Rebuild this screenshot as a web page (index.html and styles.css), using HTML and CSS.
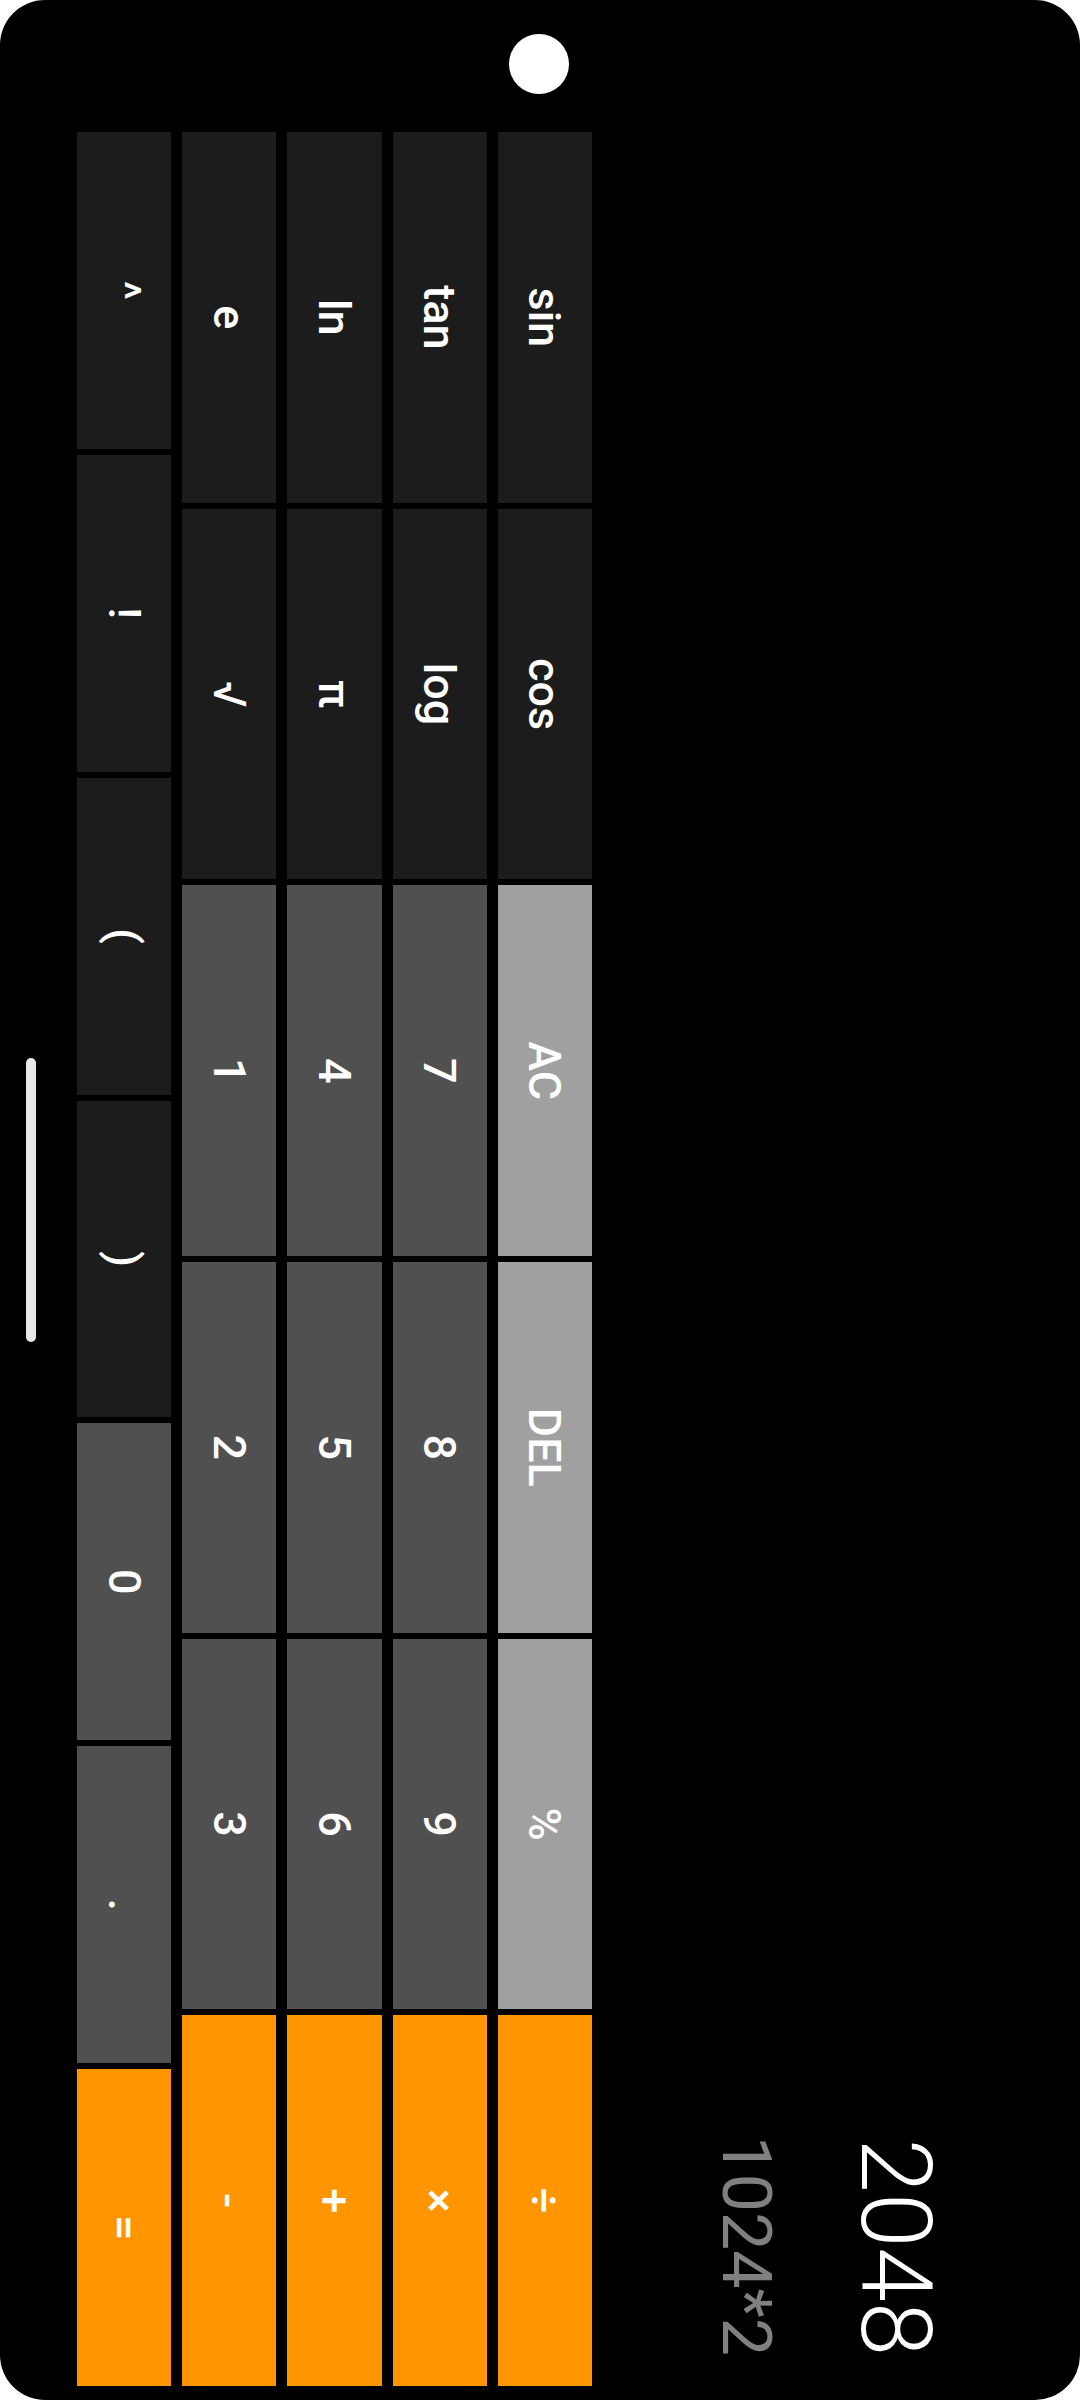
FILE: index.html
```html
<!DOCTYPE html>
<html lang="en">
<head>
  <meta charset="UTF-8" />
  <meta name="viewport" content="width=device-width, initial-scale=1.0"/>
  <title>Calculator</title>
  <link rel="stylesheet" href="styles.css">
</head>
<body>
  <div class="frame">
    <!-- phone is held in landscape, so the whole screen is turned a quarter clockwise -->
    <div class="screen">
      <div class="main">
        <div class="inset">
          <div class="camera"></div>
        </div>

        <div class="calc">
          <div class="display">
            <div class="result">2048</div>
            <div class="expr">1024*2</div>
          </div>

          <div class="keys">
            <div class="row">
              <div class="key fn">sin</div>
              <div class="key fn">cos</div>
              <div class="key top">AC</div>
              <div class="key top">DEL</div>
              <div class="key top">%</div>
              <div class="key op">÷</div>
            </div>
            <div class="row">
              <div class="key fn">tan</div>
              <div class="key fn">log</div>
              <div class="key num">7</div>
              <div class="key num">8</div>
              <div class="key num">9</div>
              <div class="key op">×</div>
            </div>
            <div class="row">
              <div class="key fn">ln</div>
              <div class="key fn">π</div>
              <div class="key num">4</div>
              <div class="key num">5</div>
              <div class="key num">6</div>
              <div class="key op">+</div>
            </div>
            <div class="row">
              <div class="key fn">e</div>
              <div class="key fn">√</div>
              <div class="key num">1</div>
              <div class="key num">2</div>
              <div class="key num">3</div>
              <div class="key op">-</div>
            </div>
            <div class="row">
              <div class="key fn">^</div>
              <div class="key fn">!</div>
              <div class="key fn">(</div>
              <div class="key fn">)</div>
              <div class="key num">0</div>
              <div class="key num">.</div>
              <div class="key op">=</div>
            </div>
          </div>
        </div>
      </div>

      <div class="navbar">
        <div class="handle"></div>
      </div>
    </div>
  </div>
</body>
</html>
```

FILE: styles.css
```css
html, body {
  margin: 0;
  padding: 0;
  overflow: hidden;
  background: white;
}

body {
  font-family: Roboto, 'Noto Sans', sans-serif;
}

.frame {
  width: 1080px;
  height: 2400px;
  overflow: hidden;
}

.screen {
  width: 2400px;
  height: 1080px;
  background: #000;
  border-radius: 45px;
  display: flex;
  flex-direction: column;
  transform-origin: 0 0;
  transform: translateX(1080px) rotate(90deg);
}

.main {
  height: 1003px;
  display: flex;
}

.inset {
  width: 132px;
  flex-shrink: 0;
}

.camera {
  width: 60px;
  height: 60px;
  border-radius: 50%;
  background: #fff;
  margin: 511px 0 0 34px;
}

.calc {
  flex: 1;
  display: flex;
  flex-direction: column;
  padding-right: 14px;
}

.display {
  height: 488px;
  box-sizing: border-box;
  padding: 129px 30px 0 0;
  text-align: right;
}

.result {
  font-size: 98px;
  font-weight: 300;
  line-height: 112px;
  color: #fff;
}

.expr {
  font-size: 68px;
  line-height: 80px;
  margin-top: 53px;
  color: #808080;
}

.keys {
  height: 515px;
  display: flex;
  flex-direction: column;
  gap: 11px;
}

.row {
  flex: 1;
  display: flex;
  gap: 6px;
}

.key {
  flex: 1;
  display: flex;
  align-items: center;
  justify-content: center;
  font-size: 45px;
  font-weight: 500;
  color: #fff;
}

.fn {
  background: #1c1c1c;
}

.num {
  background: #505050;
}

.top {
  background: #a0a0a0;
}

.op {
  background: #ff9500;
}

.navbar {
  flex: 1;
  display: flex;
  justify-content: center;
}

.handle {
  width: 284px;
  height: 10px;
  margin-top: 41px;
  border-radius: 5px;
  background: #e8e8e8;
}
```
